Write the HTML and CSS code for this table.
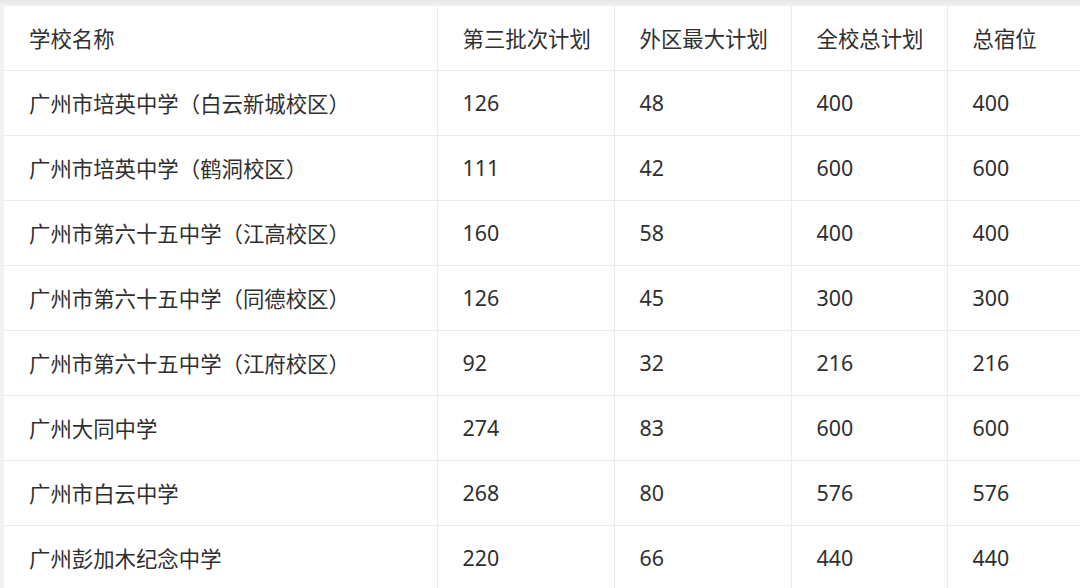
FILE: index.html
```html
<!DOCTYPE html>
<html lang="zh">
<head>
<meta charset="utf-8">
<link rel="stylesheet" href="styles.css">
</head>
<body>
<div class="frame">
<table class="plan">
<colgroup>
<col class="c1"><col class="c2"><col class="c3"><col class="c4"><col class="c5">
</colgroup>
<thead>
<tr><th>学校名称</th><th>第三批次计划</th><th>外区最大计划</th><th>全校总计划</th><th>总宿位</th></tr>
</thead>
<tbody>
<tr><td>广州市培英中学（白云新城校区）</td><td>126</td><td>48</td><td>400</td><td>400</td></tr>
<tr><td>广州市培英中学（鹤洞校区）</td><td>111</td><td>42</td><td>600</td><td>600</td></tr>
<tr><td>广州市第六十五中学（江高校区）</td><td>160</td><td>58</td><td>400</td><td>400</td></tr>
<tr><td>广州市第六十五中学（同德校区）</td><td>126</td><td>45</td><td>300</td><td>300</td></tr>
<tr><td>广州市第六十五中学（江府校区）</td><td>92</td><td>32</td><td>216</td><td>216</td></tr>
<tr><td>广州大同中学</td><td>274</td><td>83</td><td>600</td><td>600</td></tr>
<tr><td>广州市白云中学</td><td>268</td><td>80</td><td>576</td><td>576</td></tr>
<tr><td>广州彭加木纪念中学</td><td>220</td><td>66</td><td>440</td><td>440</td></tr>
</tbody>
</table>
</div>
</body>
</html>
```
FILE: styles.css
```css
html, body {
  margin: 0;
  padding: 0;
  width: 1080px;
  height: 588px;
  overflow: hidden;
  background: #efefef;
}
.frame {
  padding: 6px 0 0 4px;
  background: linear-gradient(to bottom, #e6e6e6 0, #f2f2f2 6px);
  height: 100%;
  box-sizing: border-box;
}
.plan {
  border-collapse: collapse;
  table-layout: fixed;
  width: 1120px;
  background: #fff;
  border-radius: 4px 0 0 0;
  font-family: "Noto Sans", "Noto Sans CJK SC", sans-serif;
  font-size: 21.4px;
  color: #2f2f2f;
}
.c1 { width: 433px; }
.c2 { width: 177px; }
.c3 { width: 177px; }
.c4 { width: 156px; }
.c5 { width: 177px; }
.plan th, .plan td {
  text-align: left;
  font-weight: normal;
  padding: 0 0 0 25px;
  border: 1px solid #ececec;
  white-space: nowrap;
  box-sizing: border-box;
}
.plan th { height: 64px; border-top: none; }
.plan td { height: 65px; }
.plan tr > :first-child { border-left: none; }
```
